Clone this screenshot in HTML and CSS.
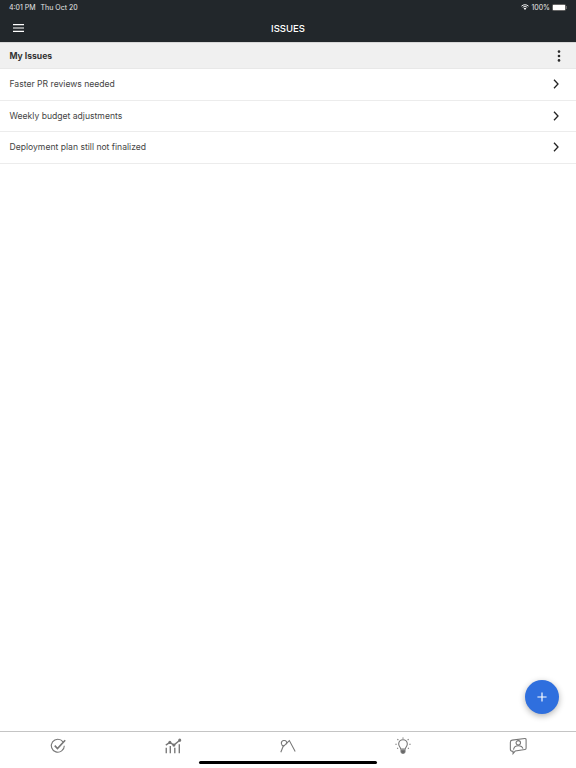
FILE: index.html
```html
<!DOCTYPE html>
<html lang="en">

<head>
    <meta charset="UTF-8">
    <meta name="viewport" content="width=device-width, initial-scale=1.0">
    <title>Issues</title>
    <link rel="stylesheet" href="styles.css">
</head>

<body>

    <div class="app">
        <header class="top">
            <div class="status">
                <span>4:01 PM</span>
                <span class="status-date">Thu Oct 20</span>
                <span class="status-right">
                    <svg class="wifi" viewBox="0 0 12 9"><path d="M.7 3.200C3.600.4 8.400.4 11.300 3.200M2.600 5.100c2-1.700 4.800-1.700 6.800 0" fill="none" stroke="#fff" stroke-width="1.400"/><path d="M6 9 4 6.800c1.200-.9 2.800-.9 4 0z" fill="#fff"/></svg>
                    <span>100%</span>
                    <span class="battery"><span class="battery-fill"></span></span>
                </span>
            </div>
            <div class="title-bar">
                <svg class="menu" viewBox="0 0 11 8"><path d="M0 .6h11M0 4h11M0 7.400h11" stroke="#fff" stroke-width="1.100"/></svg>
                <h1>ISSUES</h1>
            </div>
        </header>

        <div class="section">
            <span>My Issues</span>
            <svg class="more" viewBox="0 0 4 12"><circle cx="2" cy="1.600" r="1.300"/><circle cx="2" cy="6" r="1.300"/><circle cx="2" cy="10.400" r="1.300"/></svg>
        </div>

        <ul class="issues">
            <li>
                <span>Faster PR reviews needed</span>
                <svg class="chevron" viewBox="0 0 6 10"><path d="M1 .8 5 5 1 9.200" /></svg>
            </li>
            <li>
                <span>Weekly budget adjustments</span>
                <svg class="chevron" viewBox="0 0 6 10"><path d="M1 .8 5 5 1 9.200" /></svg>
            </li>
            <li>
                <span>Deployment plan still not finalized</span>
                <svg class="chevron" viewBox="0 0 6 10"><path d="M1 .8 5 5 1 9.200" /></svg>
            </li>
        </ul>

        <button class="fab" type="button">
            <svg viewBox="0 0 12 12"><path d="M6 .5v11M.5 6h11" stroke="#fff" stroke-width="1.400"/></svg>
        </button>

        <nav class="tabs">
            <svg class="tab" viewBox="0 0 20 20"><path d="M15.600 5.400A7.200 7.200 0 1 0 17 9.600"/><path d="M6.400 9.600 9.400 12.800 18 3.600" stroke-width="1.800"/></svg>
            <svg class="tab" viewBox="0 0 20 20"><path d="M2 9 6.500 6 11 9 17.500 3.500" stroke-width="1.500"/><path d="M2.500 12v6M7 10v8M12 12v6M17 8v10" stroke-width="1.500"/><circle cx="6.500" cy="6" r="1.100" fill="#666"/><circle cx="11" cy="9" r="1.100" fill="#666"/><circle cx="17.500" cy="3.500" r="1.100" fill="#666"/></svg>
            <svg class="tab" viewBox="0 0 20 20"><path d="M2 17 5 9.500"/><path d="M5.500 10C2 9.500 1.500 5 5 4c3-.8 4.500 2 3 4"/><path d="M5 10.500 11.500 4 18 16"/></svg>
            <svg class="tab" viewBox="0 0 20 20"><path d="M7.500 13.500c0-2-2.300-3-2.300-5.700a4.800 4.800 0 0 1 9.600 0c0 2.700-2.300 3.700-2.300 5.700z"/><path d="M7.800 15h4.400v1.800l-1.200 1.200H9l-1.200-1.200z" fill="#666"/><path d="M10 .5v1.500M3.800 2.300l1 1.100M16.200 2.300l-1 1.100M1.500 8H3M17 8h1.500M3.500 13l1-.8M16.500 13l-1-.8"/></svg>
            <svg class="tab" viewBox="0 0 20 20"><path d="M3.500 3.500 17.500 1.700c.8-.1 1.500.4 1.500 1.300v9.500c0 .8-.5 1.300-1.300 1.400L7 15.500 4.500 18.500V16C2.500 16 1.500 15 1.500 13.500V6C1.500 4.500 2 3.700 3.500 3.500z"/><circle cx="10.300" cy="6.500" r="2.500"/><path d="M5 14c.5-3 3-4.300 5.300-4.300S15 11 15.500 13"/></svg>
        </nav>

        <div class="home-bar"></div>
    </div>

</body>

</html>
```

FILE: styles.css
```css
/* Basic Reset */
* {
    margin: 0;
    padding: 0;
    box-sizing: border-box;
}

body {
    font-family: 'Inter', 'Liberation Sans', sans-serif;
    background-color: #fff;
    color: #333;
}

.app {
    position: relative;
    display: flex;
    flex-direction: column;
    width: 576px;
    height: 768px;
    overflow: hidden;
}

/* Header */
.top {
    height: 42px;
    background-color: #22272b;
    color: #fff;
}

.status {
    display: flex;
    align-items: center;
    height: 14px;
    padding: 0 10px 0 9px;
    font-size: 7px;
    color: #e8e8e8;
}

.status-date {
    margin-left: 5px;
}

.status-right {
    display: flex;
    align-items: center;
    margin-left: auto;
}

.wifi {
    width: 8px;
    height: 6px;
    margin-right: 2px;
}

.battery {
    position: relative;
    display: flex;
    width: 14px;
    height: 7px;
    margin-left: 2px;
    padding: 1px;
    border-radius: 2px;
    background-color: #666;
}

/* battery nub */
.battery::after {
    content: "";
    position: absolute;
    right: -1px;
    top: 2px;
    width: 1px;
    height: 3px;
    background-color: #666;
}

.battery-fill {
    flex: 1;
    background-color: #fff;
}

.title-bar {
    position: relative;
    display: flex;
    align-items: center;
    justify-content: center;
    height: 28px;
}

.title-bar h1 {
    font-size: 9.5px;
    font-weight: 500;
}

.menu {
    position: absolute;
    left: 13px;
    top: 10px;
    width: 11px;
    height: 8px;
}

/* Section heading */
.section {
    display: flex;
    align-items: center;
    justify-content: space-between;
    height: 27px;
    padding: 0 15px 0 9.5px;
    background-color: #f0f0f0;
    border-top: 1px solid #d8d8d8;
    border-bottom: 1px solid #e8e8e8;
    font-size: 8.6px;
    font-weight: 700;
}

.more {
    width: 4px;
    height: 12px;
    fill: #2a2a2a;
}

/* List */
.issues {
    list-style: none;
}

.issues li {
    display: flex;
    align-items: center;
    justify-content: space-between;
    height: 31.5px;
    padding: 0 17px 0 9.5px;
    border-bottom: 1px solid #ececec;
    font-size: 8.6px;
    color: #444;
}

.chevron {
    width: 6px;
    height: 10px;
    fill: none;
    stroke: #222;
    stroke-width: 1.3;
}

/* Add button */
.fab {
    position: absolute;
    right: 17px;
    bottom: 54px;
    display: flex;
    align-items: center;
    justify-content: center;
    width: 34px;
    height: 34px;
    border: none;
    border-radius: 50%;
    background-color: #2f6fde;
    box-shadow: 0 2px 6px rgba(0, 0, 0, 0.3);
}

.fab svg {
    width: 10px;
    height: 10px;
}

/* Bottom tabs */
.tabs {
    display: grid;
    grid-template-columns: repeat(5, 1fr);
    justify-items: center;
    margin-top: auto;
    height: 37px;
    padding-top: 5px;
    border-top: 1px solid #c4c4c4;
}

.tab {
    width: 18px;
    height: 18px;
    fill: none;
    stroke: #777;
    stroke-width: 1.2;
}

.home-bar {
    position: absolute;
    left: 199px;
    bottom: 4px;
    width: 178px;
    height: 3px;
    border-radius: 2px;
    background-color: #000;
}
```
